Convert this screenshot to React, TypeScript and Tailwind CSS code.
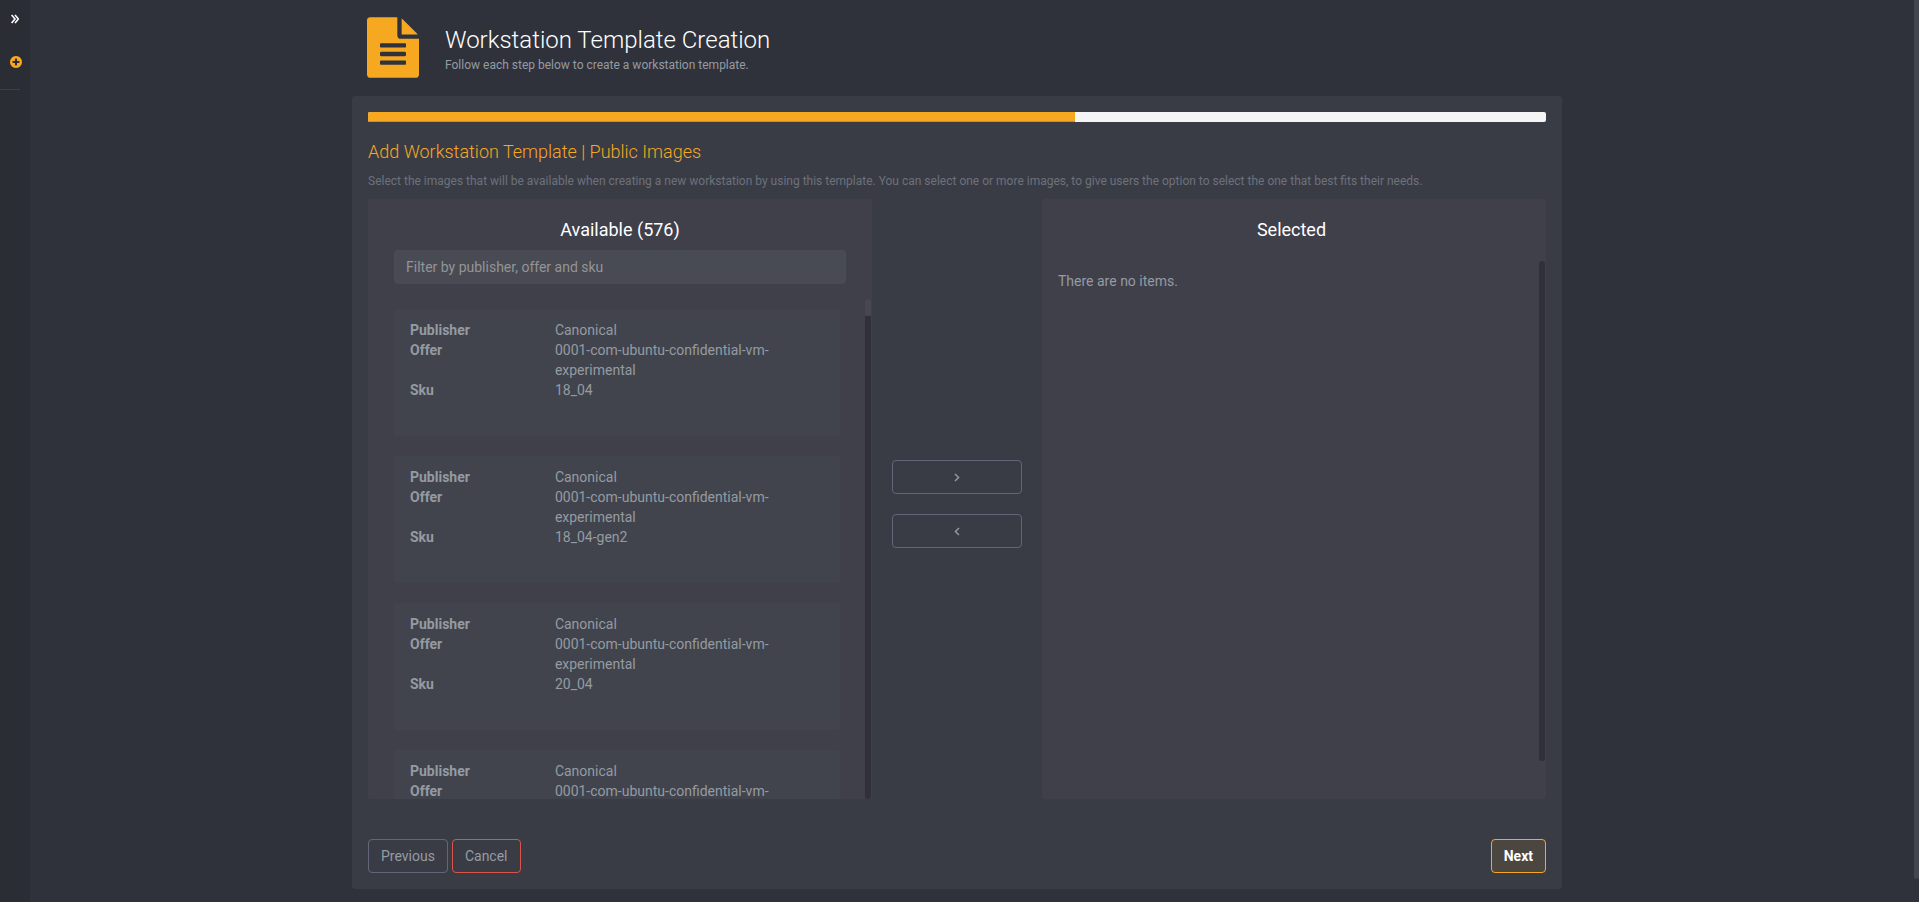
import { useState } from 'react';

type Image = { publisher: string; offer: string; sku: string };

const images: Image[] = [
  { publisher: 'Canonical', offer: '0001-com-ubuntu-confidential-vm-experimental', sku: '18_04' },
  { publisher: 'Canonical', offer: '0001-com-ubuntu-confidential-vm-experimental', sku: '18_04-gen2' },
  { publisher: 'Canonical', offer: '0001-com-ubuntu-confidential-vm-experimental', sku: '20_04' },
  { publisher: 'Canonical', offer: '0001-com-ubuntu-confidential-vm-experimental', sku: '20_04-gen2' },
];

function FileIcon() {
  return (
    <svg viewBox="128 0 1536 1792" className="h-[61px] w-[52px] fill-[#f6a821]" aria-hidden="true">
      <path d="M1596 476q14 14 28 36h-472v-472q22 14 36 28zm-476 164h544v1056q0 40-28 68t-68 28h-1344q-40 0-68-28t-28-68v-1600q0-40 28-68t68-28h800v544q0 40 28 68t68 28zm160 736v-64q0-14-9-23t-23-9h-704q-14 0-23 9t-9 23v64q0 14 9 23t23 9h704q14 0 23-9t9-23zm0-256v-64q0-14-9-23t-23-9h-704q-14 0-23 9t-9 23v64q0 14 9 23t23 9h704q14 0 23-9t9-23zm0-256v-64q0-14-9-23t-23-9h-704q-14 0-23 9t-9 23v64q0 14 9 23t23 9h704q14 0 23-9t9-23z" />
    </svg>
  );
}

function PlusCircle() {
  return (
    <svg viewBox="0 128 1536 1536" className="size-3 fill-[#f6a821]" aria-hidden="true">
      <path d="M1216 960v-128q0-26-19-45t-45-19h-256v-256q0-26-19-45t-45-19h-128q-26 0-45 19t-19 45v256h-256q-26 0-45 19t-19 45v128q0 26 19 45t45 19h256v256q0 26 19 45t45 19h128q26 0 45-19t19-45v-256h256q26 0 45-19t19-45zm320-64q0 209-103 385.5t-279.5 279.5-385.5 103-385.5-103-279.5-279.5-103-385.5 103-385.5 279.5-279.5 385.5-103 385.5 103 279.5 279.5 103 385.5z" />
    </svg>
  );
}

function Sidebar() {
  return (
    <nav className="flex w-[30px] shrink-0 flex-col bg-[#2b2d35]">
      <button type="button" aria-label="Expand menu" className="mt-[14px] ml-[11px] flex h-[11px] w-2 items-start">
        <svg viewBox="0 0 8 10" className="h-[10px] w-2 fill-none stroke-white" strokeWidth="1.6" aria-hidden="true">
          <path d="M0.6 1l3.4 4l-3.4 4M4 1l3.4 4l-3.4 4" />
        </svg>
      </button>
      <a href="#new" aria-label="New template" className="mt-[31px] ml-[10px] block">
        <PlusCircle />
      </a>
      <hr className="mt-[21px] w-5 border-[#3d404c]" />
    </nav>
  );
}

function ImageCard({ image }: { image: Image }) {
  return (
    <dl className="grid min-h-[127px] grid-cols-[35%_55%] content-start rounded-[3px] bg-[#42444d] px-4 py-[11px] leading-5">
      <dt className="font-bold">Publisher</dt>
      <dd>{image.publisher}</dd>
      <dt className="font-bold">Offer</dt>
      <dd>{image.offer}</dd>
      <dt className="font-bold">Sku</dt>
      <dd>{image.sku}</dd>
    </dl>
  );
}

export default function App() {
  const [filter, setFilter] = useState('');
  const available = images.filter((i) => `${i.publisher} ${i.offer} ${i.sku}`.includes(filter));

  return (
    <div className="flex min-h-screen bg-[#2f323b] font-[Roboto,sans-serif] text-sm leading-5 text-[#949ba2]">
      <Sidebar />

      <main className="flex-1 pr-[30px] pb-[13px]">
        <div className="mx-auto max-w-[1210px]">
          {/* HEADER */}
          <header className="flex h-24 items-start gap-[26px] pt-[17px] pl-[15px]">
            <FileIcon />
            <div className="pt-[9px]">
              <h1 className="text-2xl leading-[28px] font-light text-white">Workstation Template Creation</h1>
              <p className="text-xs leading-[22px]">Follow each step below to create a workstation template.</p>
            </div>
          </header>

          {/* WIZARD */}
          <section className="rounded-[3px] bg-[#3a3c45] p-4">
            <div className="h-[10px] overflow-hidden rounded-[2px] bg-[#f5f5f5]">
              <div className="h-full w-3/5 border-b border-[#d18f1c] bg-[#f6a821]" />
            </div>

            <h2 className="mt-5 text-lg leading-5 font-light text-[#f6a821]">Add Workstation Template | Public Images</h2>
            <p className="mt-[9px] text-xs leading-5 text-[#6c717c]">
              Select the images that will be available when creating a new workstation by using this template. You can
              select one or more images, to give users the option to select the one that best fits their needs.
            </p>

            <div className="mt-2 flex h-[600px]">
              {/* AVAILABLE */}
              <div className="flex flex-1 flex-col overflow-hidden rounded-[3px] bg-[#40404b]">
                <h3 className="pt-[21px] text-center text-lg leading-5 text-white">Available (576)</h3>
                <div className="mt-[10px] px-[26px]">
                  <input
                    type="text"
                    aria-label="Filter images"
                    placeholder="Filter by publisher, offer and sku"
                    value={filter}
                    onChange={(e) => setFilter(e.target.value)}
                    className="block h-[34px] w-full rounded bg-[#494b54] px-3 outline-none placeholder:text-[#949494]"
                  />
                </div>
                <div className="mt-[15px] flex min-h-0 flex-1 pr-px">
                  <div className="flex flex-1 flex-col gap-5 overflow-hidden pt-[10px] pr-[25px] pl-[26px]">
                    {available.map((image) => (
                      <ImageCard key={image.sku} image={image} />
                    ))}
                  </div>
                  <div className="w-[6px] rounded-b-full bg-[#2f303b]">
                    <div className="h-[17px] bg-[#40404b]">
                      <div className="h-full rounded-full bg-[#464752]" />
                    </div>
                  </div>
                </div>
              </div>

              {/* MOVE BUTTONS */}
              <div className="flex w-[170px] flex-col justify-center gap-5 px-5 pt-[10px]">
                <button
                  type="button"
                  aria-label="Add to selected"
                  className="flex h-[34px] items-center justify-center rounded border border-[#616779]"
                >
                  <svg viewBox="0 0 6 9" className="h-[9px] w-[6px] fill-none stroke-current" strokeWidth="1.4" aria-hidden="true">
                    <path d="M1 1l3.6 3.5l-3.6 3.5" />
                  </svg>
                </button>
                <button
                  type="button"
                  aria-label="Remove from selected"
                  className="flex h-[34px] items-center justify-center rounded border border-[#616779]"
                >
                  <svg viewBox="0 0 6 9" className="h-[9px] w-[6px] fill-none stroke-current" strokeWidth="1.4" aria-hidden="true">
                    <path d="M5 1l-3.6 3.5l3.6 3.5" />
                  </svg>
                </button>
              </div>

              {/* SELECTED */}
              <div className="flex flex-1 flex-col rounded-[3px] bg-[#40404b]">
                <h3 className="pt-[21px] pr-[5px] text-center text-lg leading-5 text-white">Selected</h3>
                <div className="mt-[21px] flex h-[500px] pr-px">
                  <p className="flex-1 px-4 pt-[10px]">There are no items.</p>
                  <div className="w-[6px] rounded-full bg-[#2f303b]" />
                </div>
              </div>
            </div>

            {/* FOOTER */}
            <div className="mt-10 flex gap-1">
              <button type="button" className="h-[34px] rounded border border-[#616779] px-3">
                Previous
              </button>
              <button type="button" className="h-[34px] rounded border border-[#db524b] px-3">
                Cancel
              </button>
              <button
                type="button"
                className="ml-auto h-[34px] rounded border border-[#f6a821] bg-[#4c4641] px-3 font-bold text-white"
              >
                Next
              </button>
            </div>
          </section>
        </div>
      </main>

      {/* PAGE SCROLLBAR */}
      <div className="w-[5px] shrink-0 pb-[23px]">
        <div className="h-full rounded-b-full bg-[#43454f]" />
      </div>
    </div>
  );
}
